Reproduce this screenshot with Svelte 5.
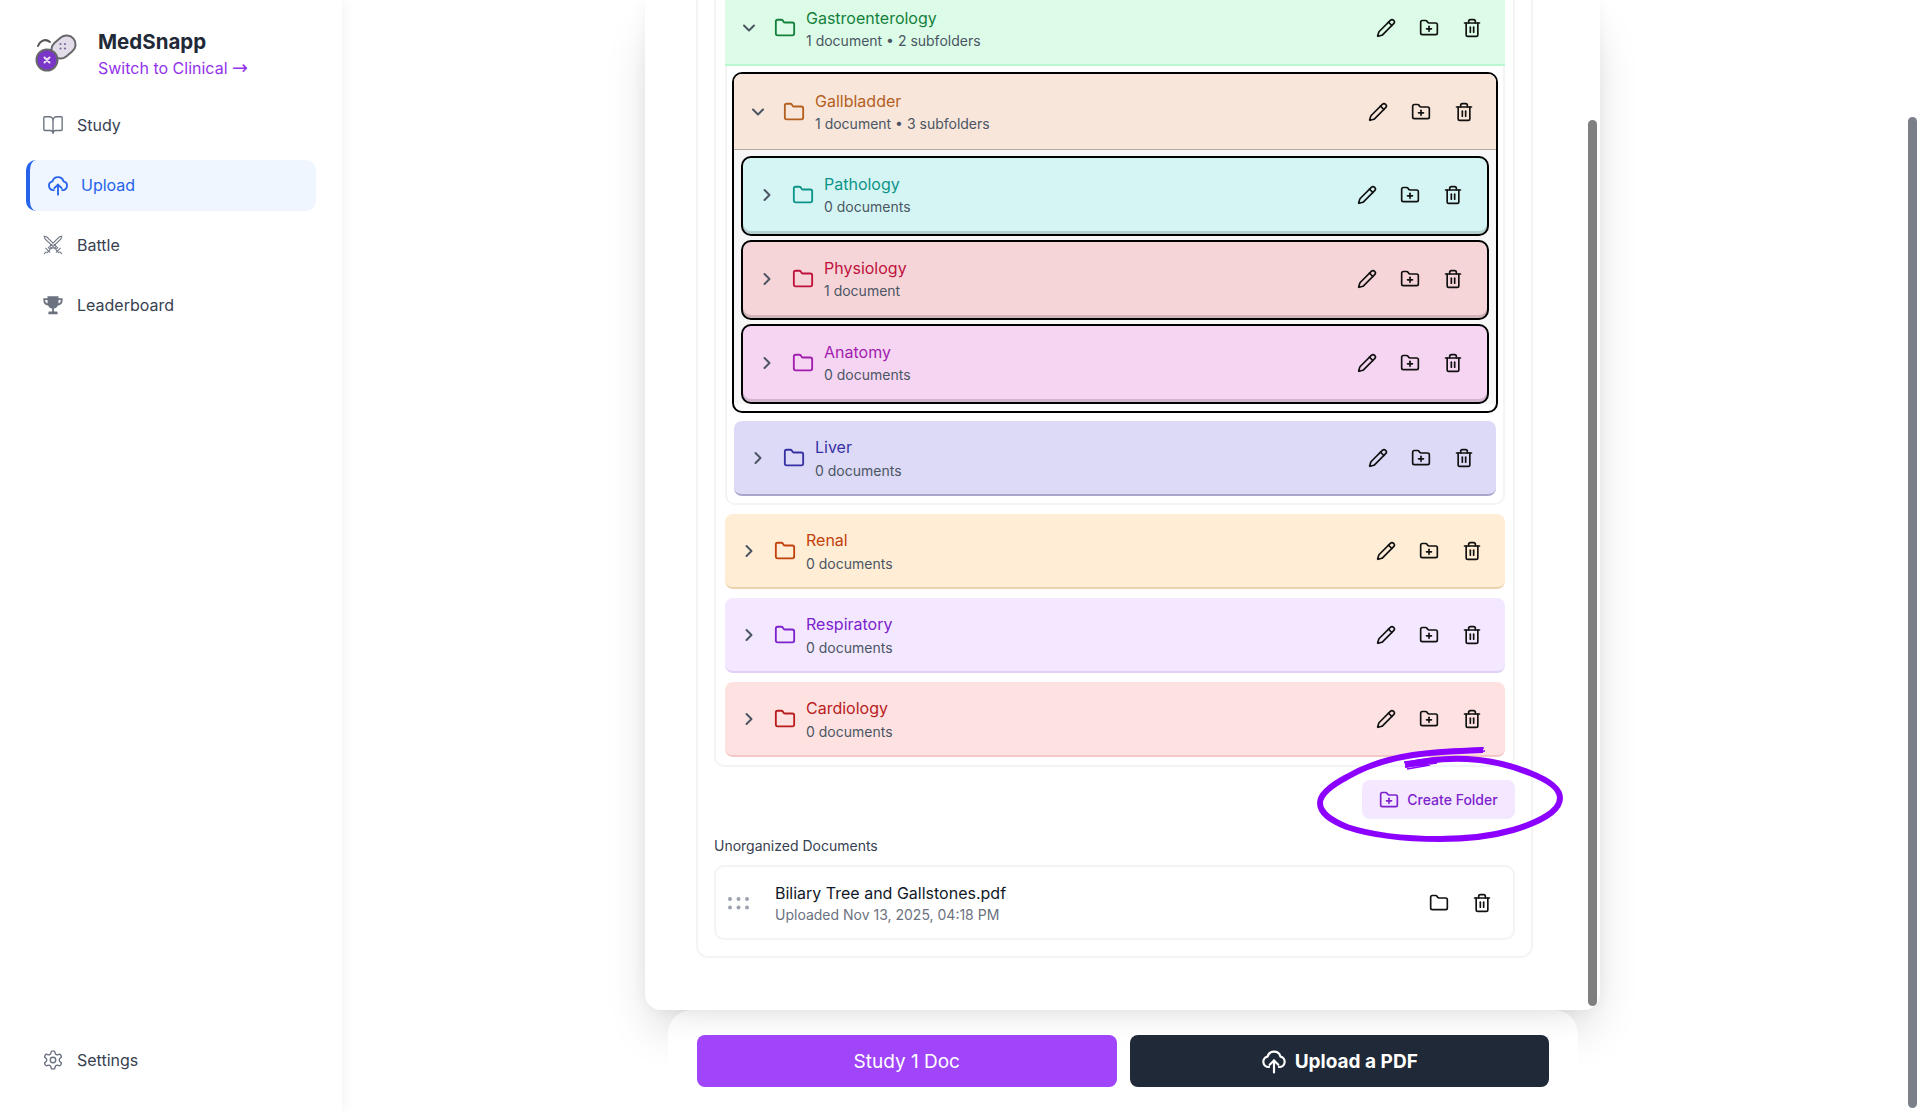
<script>
  const sub = [
    { name: 'Pathology', meta: '0 documents', c: 'teal' },
    { name: 'Physiology', meta: '1 document', c: 'rose' },
    { name: 'Anatomy', meta: '0 documents', c: 'fuchsia' }
  ];
  const top = [
    { name: 'Renal', meta: '0 documents', c: 'orange' },
    { name: 'Respiratory', meta: '0 documents', c: 'purple' },
    { name: 'Cardiology', meta: '0 documents', c: 'red' }
  ];
</script>

{#snippet folder()}
  <svg class="ic22" viewBox="0 0 24 24" fill="none" stroke="currentColor" stroke-width="2" stroke-linecap="round" stroke-linejoin="round"><path d="M20 20a2 2 0 0 0 2-2V8a2 2 0 0 0-2-2h-7.9a2 2 0 0 1-1.69-.9L9.6 3.9A2 2 0 0 0 7.93 3H4a2 2 0 0 0-2 2v13a2 2 0 0 0 2 2Z"/></svg>
{/snippet}
{#snippet trash()}
  <svg class="ic20" viewBox="0 0 24 24" fill="none" stroke="#111" stroke-width="2" stroke-linecap="round" stroke-linejoin="round"><path d="M3 6h18"/><path d="M19 6v14a2 2 0 0 1-2 2H7a2 2 0 0 1-2-2V6"/><path d="M8 6V4a2 2 0 0 1 2-2h4a2 2 0 0 1 2 2v2"/><path d="M10 11v6"/><path d="M14 11v6"/></svg>
{/snippet}
{#snippet plusFolder(color)}
  <svg class="ic20" viewBox="0 0 24 24" fill="none" stroke={color} stroke-width="2" stroke-linecap="round" stroke-linejoin="round"><path d="M12 10v6"/><path d="M9 13h6"/><path d="M20 20a2 2 0 0 0 2-2V8a2 2 0 0 0-2-2h-7.9a2 2 0 0 1-1.69-.9L9.6 3.9A2 2 0 0 0 7.93 3H4a2 2 0 0 0-2 2v13a2 2 0 0 0 2 2Z"/></svg>
{/snippet}
{#snippet actions()}
  <div class="actions">
    <svg class="ic20" viewBox="0 0 24 24" fill="none" stroke="#111" stroke-width="2" stroke-linecap="round" stroke-linejoin="round"><path d="M21.17 6.81a2.82 2.82 0 0 0-3.99-3.99L3.84 16.17a2 2 0 0 0-.5.83l-1.32 4.35a.5.5 0 0 0 .62.62l4.35-1.32a2 2 0 0 0 .83-.5Z"/><path d="m15 5 4 4"/></svg>
    {@render plusFolder('#111')}
    {@render trash()}
  </div>
{/snippet}
{#snippet rowBody(name, meta, open)}
  <svg class="chev" class:open viewBox="0 0 24 24" fill="none" stroke="currentColor" stroke-width="2.4" stroke-linecap="round" stroke-linejoin="round"><path d="m9 18 6-6-6-6"/></svg>
  <span class="fold">{@render folder()}</span>
  <div class="txt"><div class="name">{name}</div><div class="meta">{meta}</div></div>
  {@render actions()}
{/snippet}
{#snippet cloud(w)}
  <svg style="width:{w}px;height:{w}px" viewBox="0 0 24 24" fill="none" stroke="currentColor" stroke-width="2" stroke-linecap="round" stroke-linejoin="round"><path d="M12 22.500V11.500"/><path d="m8 15.500 4-4 4 4"/><path d="M7.500 17.500H7a4.800 4.800 0 0 1-1-9.500 6.200 6.200 0 0 1 12 0 4.800 4.800 0 0 1-1 9.500h-.5"/></svg>
{/snippet}

<div class="page">
  <aside class="side">
    <div class="brand">
      <svg class="logo" viewBox="30 30 50 45" fill="none">
        <path d="M38 45C40 40 45 37 50 41" stroke="#55555a" stroke-width="2" stroke-linecap="round"/>
        <rect x="50.500" y="37" width="26" height="18" rx="9" transform="rotate(-40 63.500 46)" fill="#e2dde8" stroke="#66666b" stroke-width="2"/>
        <circle cx="47" cy="59" r="10.500" fill="#7a35c9" stroke="#66666b" stroke-width="2"/>
        <path d="M44.500 56.500l5 5M49.500 56.500l-5 5" stroke="#e9e2f5" stroke-width="2" stroke-linecap="round"/>
        <g fill="#7a6aa0"><circle cx="60.500" cy="43" r="1.100"/><circle cx="65" cy="43" r="1.100"/><circle cx="60.500" cy="47.500" r="1.100"/><circle cx="65" cy="47.500" r="1.100"/></g>
      </svg>
      <div>
        <div class="title">MedSnapp</div>
        <div class="switch">Switch to Clinical <span class="arrow">→</span></div>
      </div>
    </div>
    <nav class="nav">
      <div class="item">
        <svg class="ic22" viewBox="0 0 24 24" fill="none" stroke="#6b7280" stroke-width="1.500" stroke-linejoin="round"><path d="M12 7v14"/><path d="M3 18a1 1 0 0 1-1-1V4a1 1 0 0 1 1-1h5a4 4 0 0 1 4 4 4 4 0 0 1 4-4h5a1 1 0 0 1 1 1v13a1 1 0 0 1-1 1h-6a3 3 0 0 0-3 3 3 3 0 0 0-3-3z"/></svg>
        <span>Study</span>
      </div>
      <div class="item active">{@render cloud(22)}<span>Upload</span></div>
      <div class="item">
        <svg class="ic22" viewBox="0 0 24 24" fill="none" stroke="#6b7280" stroke-width="1.100" stroke-linecap="round"><path d="M21.500 2.500l-2.800.8L7 15l1.800 1.800L20.700 5.300zM2.500 2.500l2.800.8L17 15l-1.800 1.800L3.300 5.300z"/><path d="M4 15.500l4.500 4.500M20 15.500L15.500 20M5.500 20.500l3-3M18.500 20.500l-3-3M2.500 21.500l2-2M21.500 21.500l-2-2M9 14l2 2M15 14l-2 2"/></svg>
        <span>Battle</span>
      </div>
      <div class="item">
        <svg class="ic22" viewBox="0 0 24 24" fill="#6b7280"><path d="M6 2.500h12v2h4.500v2.500c0 3-2 5-5 5.500A6 6 0 0 1 13 15.800V19h3a1 1 0 0 1 1 1v2H7v-2a1 1 0 0 1 1-1h3v-3.200a6 6 0 0 1-4.500-3.300C3.500 12 1.500 10 1.500 7V4.500H6zM3.500 6.500v.5c0 1.500.9 2.800 2.500 3.400V6.500zm17 0H18v3.900c1.600-.6 2.500-1.900 2.500-3.400z"/></svg>
        <span>Leaderboard</span>
      </div>
    </nav>
    <div class="item settings">
      <svg class="ic22" viewBox="0 0 24 24" fill="none" stroke="#6b7280" stroke-width="1.500" stroke-linecap="round" stroke-linejoin="round"><path d="M12.220 2h-.44a2 2 0 0 0-2 2v.18a2 2 0 0 1-1 1.730l-.43.250a2 2 0 0 1-2 0l-.15-.080a2 2 0 0 0-2.730.730l-.22.380a2 2 0 0 0 .730 2.730l.15.100a2 2 0 0 1 1 1.720v.510a2 2 0 0 1-1 1.740l-.15.090a2 2 0 0 0-.730 2.730l.22.380a2 2 0 0 0 2.730.730l.15-.080a2 2 0 0 1 2 0l.43.250a2 2 0 0 1 1 1.730V20a2 2 0 0 0 2 2h.44a2 2 0 0 0 2-2v-.18a2 2 0 0 1 1-1.730l.43-.250a2 2 0 0 1 2 0l.15.080a2 2 0 0 0 2.730-.730l.22-.390a2 2 0 0 0-.730-2.730l-.15-.080a2 2 0 0 1-1-1.740v-.500a2 2 0 0 1 1-1.740l.15-.090a2 2 0 0 0 .730-2.730l-.22-.380a2 2 0 0 0-2.730-.730l-.15.080a2 2 0 0 1-2 0l-.43-.250a2 2 0 0 1-1-1.730V4a2 2 0 0 0-2-2z"/><circle cx="12" cy="12" r="3"/></svg>
      <span>Settings</span>
    </div>
  </aside>

  <main class="main">
    <section class="card">
      <div class="panel">
        <div class="list">
          <div class="group">
            <div class="row green head0">{@render rowBody('Gastroenterology', '1 document • 2 subfolders', true)}</div>
            <div class="subs">
              <div class="hl">
                <div class="row amber headg inner">{@render rowBody('Gallbladder', '1 document • 3 subfolders', true)}</div>
                <div class="hl-body">
                  {#each sub as s}
                    <div class="row boxed {s.c}">{@render rowBody(s.name, s.meta, false)}</div>
                  {/each}
                </div>
              </div>
              <div class="row plain indigo inner">{@render rowBody('Liver', '0 documents', false)}</div>
            </div>
          </div>
          {#each top as t}
            <div class="row plain {t.c}">{@render rowBody(t.name, t.meta, false)}</div>
          {/each}
        </div>
        <div class="create-wrap">
          <div class="create">{@render plusFolder('#7e22ce')}<span>Create Folder</span></div>
        </div>
        <div class="ulabel">Unorganized Documents</div>
        <div class="doc">
          <svg class="dots" viewBox="0 0 23 14" fill="#9ca3af"><circle cx="3" cy="3" r="2"/><circle cx="11.500" cy="3" r="2"/><circle cx="20" cy="3" r="2"/><circle cx="3" cy="11.500" r="2"/><circle cx="11.500" cy="11.500" r="2"/><circle cx="20" cy="11.500" r="2"/></svg>
          <div class="txt">
            <div class="dname">Biliary Tree and Gallstones.pdf</div>
            <div class="dmeta">Uploaded Nov 13, 2025, 04:18 PM</div>
          </div>
          <div class="actions">
            <svg class="ic20" viewBox="0 0 24 24" fill="none" stroke="#111" stroke-width="2" stroke-linecap="round" stroke-linejoin="round"><path d="M20 20a2 2 0 0 0 2-2V8a2 2 0 0 0-2-2h-7.900a2 2 0 0 1-1.690-.900L9.600 3.900A2 2 0 0 0 7.930 3H4a2 2 0 0 0-2 2v13a2 2 0 0 0 2 2Z"/></svg>
            {@render trash()}
          </div>
        </div>
      </div>
      <div class="thumb"></div>
    </section>
    <div class="bar">
      <div class="btn study">Study 1 Doc</div>
      <div class="btn upload">{@render cloud(26)}<span>Upload a PDF</span></div>
    </div>
  </main>

  <div class="page-thumb"></div>

  <svg class="scribble" viewBox="0 0 260 110" fill="none" stroke="#8b00ff">
    <path d="M171 5C140 6 120 7 101 10C75 14 52 22 35 32C18 41 8 50 8 58C8 68 18 75 35 82C62 91 95 94 128 94C155 94 180 91 201 85C228 77 248 66 248 53C248 43 236 35 218 28C198 20 178 15 155 14C135 13 115 15 93 20" stroke-width="6"/>
    <path d="M172 3L130 5M173 6L130 8M92 17L125 13M93 22L125 18M95 24L118 20" stroke-width="1.500"/>
  </svg>
</div>

<style>
  :global(body) { margin: 0; background: #fff; font-family: Inter, "Liberation Sans", sans-serif; }
  .page { height: 1112px; overflow: hidden; display: grid; grid-template-columns: 342px 1fr; position: relative; background: #fff; }
  svg { display: block; flex: none; }
  .ic22 { width: 22px; height: 22px; }
  .ic20 { width: 20px; height: 20px; }

  .side { display: flex; flex-direction: column; box-shadow: 2px 0 12px rgba(0,0,0,.05); background: #fff; z-index: 2; padding: 0 26px; }
  .brand { display: flex; align-items: center; gap: 18px; padding: 28px 0 0 4px; height: 51px; }
  .logo { width: 50px; height: 45px; }
  .title { font-size: 20.5px; font-weight: 700; color: #1f2937; line-height: 27px; }
  .switch { font-size: 16px; color: #9333ea; line-height: 24px; margin-top: 1px; }
  .arrow { font-family: "DejaVu Sans", sans-serif; font-size: 19px; line-height: 16px; }
  .nav { display: flex; flex-direction: column; gap: 9px; margin-top: 21px; }
  .item { display: flex; align-items: center; gap: 13px; height: 51px; padding: 0 0 2px 16px; font-size: 16px; color: #374151; border-radius: 10px; box-sizing: border-box; }
  .item.active { background: #eff6ff; color: #2563eb; border-left: 4px solid #2563eb; padding-left: 17px; gap: 12px; width: 290px; }
  .settings { margin-top: auto; margin-bottom: 26px; }

  .main { padding-left: 303px; width: 955px; }
  .card { position: relative; width: 955px; height: 1010px; box-sizing: border-box; background: #fff; border-radius: 0 0 16px 16px; box-shadow: 0 25px 50px -12px rgba(0,0,0,.2), 0 0 14px rgba(0,0,0,.04); padding-left: 51px; }
  .panel { width: 837px; height: 958px; box-sizing: border-box; border: 2px solid #f3f4f6; border-top: 0; border-radius: 0 0 12px 12px; padding: 0 16px; }
  .list { border: 2px solid #f3f4f6; border-top: 0; border-radius: 0 0 10px 10px; padding: 0 8px 9px 9px; background: #fff; display: flex; flex-direction: column; gap: 9px; height: 767px; box-sizing: border-box; }
  .group { display: flex; flex-direction: column; border: 2px solid #f3f4f6; border-top: 0; border-radius: 0 0 10px 10px; height: 505px; flex: none; box-sizing: border-box; }

  .row { display: flex; align-items: center; color: #4b5563; box-sizing: border-box; padding-left: 14px; padding-right: 23px; flex: none; }
  .row.inner { padding-right: 22px; }
  .chev { width: 20px; height: 20px; color: #4b5563; flex: none; }
  .chev.open { transform: rotate(90deg); }
  .fold { margin-left: 15px; margin-right: 10px; }
  .txt { flex: 1; min-width: 0; }
  .name { font-size: 16px; line-height: 24px; font-weight: 400; }
  .meta { font-size: 14px; line-height: 20px; color: #4b5563; margin-top: 1px; }
  .actions { display: flex; align-items: center; gap: 23px; }

  .plain { height: 75px; border-radius: 8px; border-bottom: 2px solid; padding-top: 1px; }
  .plain .meta { margin-top: 2px; }
  .head0 { height: 74px; margin: -8px -2px 0; background: #dcfce7; border-bottom: 2px solid #bbf7d0; }
  .green .fold, .green .name { color: #15803d; }
  .subs { padding: 6px 5px 0; display: flex; flex-direction: column; gap: 8px; }
  .hl { border: 2px solid #000; border-radius: 10px; overflow: hidden; height: 341px; box-sizing: border-box; }
  .headg { height: 76px; background: #f8e6da; border-bottom: 1px solid #b4aaa4; }
  .amber .fold, .amber .name { color: #b45f1f; }
  .hl-body { background: #f7f7f8; padding: 6px 7px 0; display: flex; flex-direction: column; gap: 4px; }
  .boxed { height: 80px; border: 2px solid #000; border-radius: 10px; box-shadow: inset 0 -3px 0 rgba(0,0,0,.15); padding-bottom: 3px; padding-right: 24px; }
  .teal { background: #d5f5f4; } .teal .fold, .teal .name { color: #0d9488; }
  .rose { background: #f6d5d9; } .rose .fold, .rose .name { color: #be123c; }
  .fuchsia { background: #f6d5f3; } .fuchsia .fold, .fuchsia .name { color: #a21caf; }
  .indigo { background: #dddaf7; border-color: #a9a6cc; margin: 0 2px; } .indigo .fold, .indigo .name { color: #3730a3; }
  .orange { background: #ffedd5; border-color: #ecd3ad; } .orange .fold, .orange .name { color: #c2410c; }
  .purple { background: #f3e8ff; border-color: #e0d0f5; } .purple .fold, .purple .name { color: #7e22ce; }
  .red { background: #fee2e2; border-color: #f5c7c7; } .red .fold, .red .name { color: #b91c1c; }

  .create-wrap { display: flex; justify-content: flex-end; margin-top: 13px; }
  .create { display: flex; align-items: center; gap: 8px; height: 39px; width: 153px; box-sizing: border-box; justify-content: center; background: #f3e8ff; color: #7e22ce; border-radius: 8px; font-size: 14px; font-weight: 500; }
  .ulabel { font-size: 14px; font-weight: 400; color: #374151; margin-top: 17px; line-height: 20px; }
  .doc { display: flex; align-items: center; height: 75px; box-sizing: border-box; border: 2px solid #f3f4f6; border-radius: 10px; margin-top: 9px; padding: 0 21px 0 11px; }
  .dots { width: 23px; height: 14px; margin-right: 25px; }
  .dname { font-size: 16px; line-height: 24px; font-weight: 400; color: #111827; }
  .dmeta { font-size: 14px; line-height: 20px; color: #6b7280; }
  .thumb { position: absolute; left: 943px; top: 120px; width: 9px; height: 886px; border-radius: 5px; background: #7f7f7f; }
  .page-thumb { position: absolute; right: 3px; top: 117px; width: 9px; height: 991px; border-radius: 5px; background: #7a7f88; }

  .bar { position: relative; display: flex; gap: 13px; width: 910px; margin-left: 23px; box-sizing: border-box; padding: 25px 29px 0; border-radius: 24px 24px 0 0; height: 102px; background: linear-gradient(rgba(255,255,255,.45), rgba(255,255,255,.95) 30px, #fff 50px); }
  .btn { flex: 1; height: 52px; border-radius: 8px; display: flex; align-items: center; justify-content: center; font-size: 19px; color: #fff; gap: 8px; }
  .study { background: #a145fa; font-weight: 400; }
  .upload { background: #1f2937; font-weight: 700; }

  .scribble { position: absolute; left: 1312px; top: 745px; width: 260px; height: 110px; overflow: visible; z-index: 3; }
</style>
